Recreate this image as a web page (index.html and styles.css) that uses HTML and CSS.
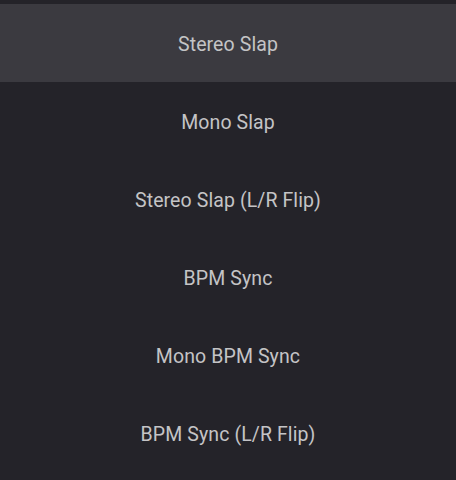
FILE: index.html
```html
<!DOCTYPE html>
<html>
<head>
<meta charset="utf-8">
<link rel="stylesheet" href="styles.css">
</head>
<body>
<ul class="menu">
  <li class="item selected">Stereo Slap</li>
  <li class="item">Mono Slap</li>
  <li class="item">Stereo Slap (L/R Flip)</li>
  <li class="item">BPM Sync</li>
  <li class="item">Mono BPM Sync</li>
  <li class="item">BPM Sync (L/R Flip)</li>
</ul>
</body>
</html>
```
FILE: styles.css
```css
html, body {
  margin: 0;
  padding: 0;
  background: #242329;
  height: 100%;
  overflow: hidden;
}
.menu {
  list-style: none;
  margin: 0;
  padding: 4px 0 0;
  display: flex;
  flex-direction: column;
}
.item {
  box-sizing: border-box;
  height: 78px;
  padding-top: 2px;
  display: flex;
  align-items: center;
  justify-content: center;
  font-family: Roboto, "Noto Sans", sans-serif;
  font-size: 19.5px;
  letter-spacing: 0.1px;
  color: #c4c4c6;
}
.selected {
  background: #3b3a40;
}
```
